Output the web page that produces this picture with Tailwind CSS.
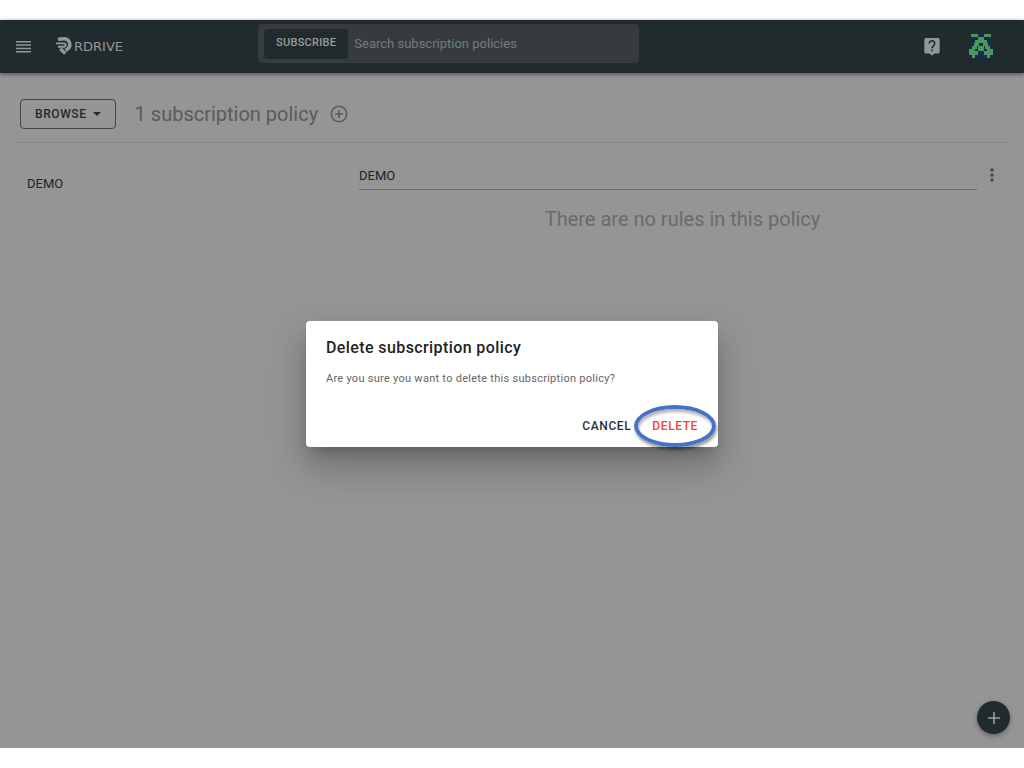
<!DOCTYPE html>
<html lang="en">
<head>
    <meta charset="UTF-8">
    <meta name="viewport" content="width=device-width, initial-scale=1.0">
    <title>RDrive - Subscription policies</title>
    <script src="https://cdn.jsdelivr.net/npm/@tailwindcss/browser@4"></script>
</head>
<body class="bg-white py-5 font-['Roboto',sans-serif]">
<div class="relative flex flex-col min-h-[calc(100vh-40px)] bg-[#959595] text-[#232323]">
    <!-- Top bar -->
    <header class="relative flex items-start h-[53px] bg-[#212b2d] shadow-[0_1px_4px_rgba(0,0,0,0.5)]">
        <div class="flex items-center w-[258px] h-full pl-4 gap-6">
            <button type="button" aria-label="Menu" class="text-[#939799]">
                <svg class="w-4 h-4" viewBox="0 0 16 16" fill="none" stroke="currentColor" stroke-width="1.5">
                    <path d="M0 2.8h15M0 6.1h15M0 9.4h15M0 12.7h15"/>
                </svg>
            </button>
            <a href="#" class="flex items-center text-[#939799]">
                <svg class="w-4 h-[19px]" viewBox="0 0 16 19" fill="none" stroke="currentColor">
                    <path d="M2 2.6C4 1.700 6 1.800 8 1.800a5.700 5.700 0 0 1 3.300 10.400l-1.800 1.100" stroke-width="3.500"/>
                    <path d="M0 6.400h8a1.600 1.600 0 0 1 0 3.400H2" stroke-width="1.900"/>
                    <path d="M4.300 11.800l5 4.800" stroke-width="3.400"/>
                </svg>
                <span class="pl-0.5 text-[13px] font-['DejaVu_Sans',sans-serif]">RDRIVE</span>
            </a>
        </div>
        <div class="flex items-center h-[39px] mt-1 w-[381px] p-1.5 rounded bg-[#363b3d]">
            <button type="button" class="h-[30px] px-3 rounded bg-[#212b2d] text-[11px] font-medium tracking-wide text-[#999d9e]">SUBSCRIBE</button>
            <input type="text" aria-label="Search" placeholder="Search subscription policies" class="flex-1 min-w-0 pl-1.5 text-[13px] text-[#999d9e] placeholder:text-[#757b7c] outline-none">
        </div>
        <div class="flex items-center h-full ml-auto pr-[29px] gap-7">
            <button type="button" aria-label="Help" class="text-[#939799]">
                <svg class="w-4 h-[18px]" viewBox="0 0 16 18">
                    <path fill="currentColor" d="M2 0h12a1.7 1.7 0 0 1 1.7 1.7v12a1.7 1.7 0 0 1-1.7 1.7h-3.7L8 17.8l-2.3-2.4H2A1.7 1.7 0 0 1 .3 13.7v-12A1.7 1.7 0 0 1 2 0z"/>
                    <path fill="none" stroke="#212b2d" stroke-width="1.6" d="M5.3 5.600a2.700 2.700 0 1 1 4.400 2C8.600 8.500 8 8.900 8 10.300"/>
                    <path fill="#212b2d" d="M7.2 11.5h1.6v1.7H7.2z"/>
                </svg>
            </button>
            <button type="button" aria-label="Account">
                <svg class="w-[27px] h-[27px]" viewBox="0 0 27 27">
                    <circle cx="13" cy="13.5" r="13" fill="#182e45"/>
                    <path fill="#4b9560" shape-rendering="crispEdges" d="M3 1h7v3H3zM16 1h7v3h-7zM10 4h6v3h-6zM7 7h12v3H7zM6 10h5v3H6zM15 10h5v3h-5zM4 13h5v3H4zM17 13h5v3h-5zM10 13h6v5h-6zM1 16h6v6H1zM19 16h6v6h-6zM7 18h3v4H7zM16 18h3v4h-3zM4 22h3v3H4zM19 22h3v3h-3z"/>
                </svg>
            </button>
        </div>
    </header>

    <!-- Page title -->
    <section class="flex items-center gap-[19px] mx-3.5 pl-1.5 h-[70px] pt-3 border-b border-[#898989]">
        <button type="button" class="flex items-center h-[30px] px-3.5 gap-1.5 rounded border border-[#3c4648] text-xs font-medium tracking-wider text-[#222b2d]">
            BROWSE
            <svg class="w-2 h-1" viewBox="0 0 8 4" fill="currentColor"><path d="M0 0h8L4 4z"/></svg>
        </button>
        <div class="flex items-center gap-3 text-[#5b5b5b]">
            <h1 class="text-xl">1 subscription policy</h1>
            <button type="button" aria-label="Add policy">
                <svg class="w-[18px] h-[18px]" viewBox="0 0 18 18" fill="none" stroke="currentColor" stroke-width="1.6">
                    <circle cx="9" cy="9" r="7.7"/>
                    <path d="M9 5v8M5 9h8"/>
                </svg>
            </button>
        </div>
    </section>

    <!-- Policies -->
    <main class="flex px-3.5">
        <nav class="w-1/3 pl-[13px] pt-7">
            <a href="#" class="text-[13px]">DEMO</a>
        </nav>
        <section class="flex-1 pl-[13px] pt-4">
            <div class="flex items-start">
                <input type="text" aria-label="Policy name" value="DEMO" class="flex-1 min-w-0 h-[31px] pt-0.5 text-[13px] border-b border-[#6b6b6b] outline-none">
                <button type="button" aria-label="More" class="pl-[13px] pr-4 pt-[9px] text-[#444]">
                    <svg class="w-1 h-[14px]" viewBox="0 0 4 14" fill="currentColor">
                        <circle cx="2" cy="2" r="1.7"/><circle cx="2" cy="7" r="1.7"/><circle cx="2" cy="12" r="1.7"/>
                    </svg>
                </button>
            </div>
            <p class="pt-[15px] pr-1 text-xl text-center text-[#6a6a6a]">There are no rules in this policy</p>
        </section>
    </main>

    <button type="button" aria-label="Add" class="absolute right-3.5 bottom-3.5 flex items-center justify-center w-[33px] h-[33px] rounded-full bg-[#212b2d] text-[#999d9e] shadow-[0_2px_5px_rgba(0,0,0,0.35)]">
        <svg class="w-3 h-3" viewBox="0 0 12 12" fill="none" stroke="currentColor" stroke-width="1.6"><path d="M6 0v12M0 6h12"/></svg>
    </button>

    <!-- Confirm dialog -->
    <div class="absolute inset-0 flex items-center justify-center">
        <div role="dialog" aria-labelledby="dialogTitle" class="w-[412px] rounded bg-white shadow-[0_9px_12px_-5px_rgba(0,0,0,0.2),0_18px_36px_2px_rgba(0,0,0,0.25)]">
            <div class="px-5 pt-[15px]">
                <h2 id="dialogTitle" class="text-base font-medium tracking-wide text-[#1f1f1f]">Delete subscription policy</h2>
                <p class="pt-[11px] text-[11px] leading-4 tracking-wide text-[#666]">Are you sure you want to delete this subscription policy?</p>
            </div>
            <div class="flex justify-end items-center mt-[22px] h-[38px] pr-5 pb-1 gap-[21px] text-xs font-medium tracking-wider">
                <button type="button" class="text-[#263238]">CANCEL</button>
                <button type="button" class="relative text-[#f0453a]">
                    DELETE
                    <span class="absolute -inset-x-[18px] -inset-y-[13px] rounded-[50%] border-4 border-[#4472c4] shadow-[1px_3px_3px_rgba(0,0,0,0.4),inset_1px_3px_3px_rgba(0,0,0,0.3)]"></span>
                </button>
            </div>
        </div>
    </div>
</div>
</body>
</html>
